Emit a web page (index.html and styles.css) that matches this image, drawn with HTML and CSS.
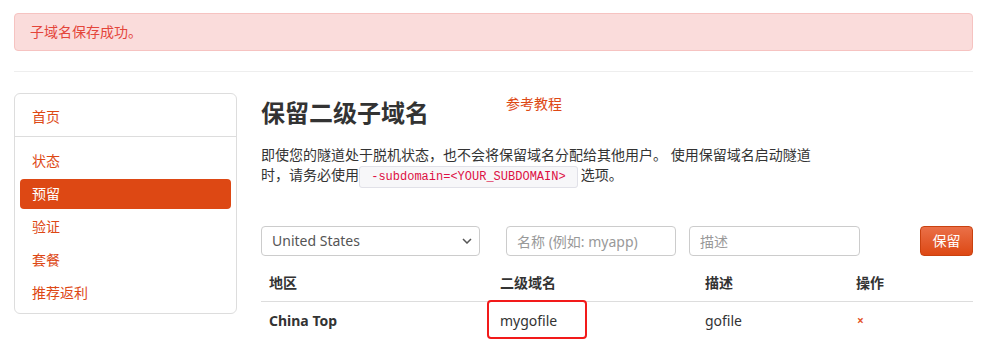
FILE: index.html
```html
<!DOCTYPE html>
<html lang="zh-CN">
<head>
  <meta charset="UTF-8">
  <title>保留二级子域名</title>
  <link rel="stylesheet" href="styles.css">
</head>
<body>
  <div class="container">
    <div class="alert">子域名保存成功。</div>
    <hr class="divider">
    <div class="layout">
      <div class="sidebar">
        <div class="sidebar-top">
          <a class="nav-item" href="#">首页</a>
        </div>
        <div class="sidebar-nav">
          <a class="nav-item" href="#">状态</a>
          <a class="nav-item active" href="#">预留</a>
          <a class="nav-item" href="#">验证</a>
          <a class="nav-item" href="#">套餐</a>
          <a class="nav-item" href="#">推荐返利</a>
        </div>
      </div>
      <div class="main">
        <div class="title-row">
          <h2>保留二级子域名</h2>
          <a class="guide" href="#">参考教程</a>
        </div>
        <p class="intro">即使您的隧道处于脱机状态，也不会将保留域名分配给其他用户。 使用保留域名启动隧道时，请务必使用<code> -subdomain=&lt;YOUR_SUBDOMAIN&gt; </code>选项。</p>
        <form class="reserve-form">
          <div class="select-wrap">
            <select class="field select">
              <option>United States</option>
            </select>
            <svg class="chevron" width="10" height="6" viewBox="0 0 10 6"><path d="M1 1l4 4 4-4" fill="none" stroke="#555" stroke-width="1.5"/></svg>
          </div>
          <input class="field name" type="text" placeholder="名称 (例如: myapp)">
          <input class="field desc" type="text" placeholder="描述">
          <button class="btn" type="button">保留</button>
        </form>
        <table class="table">
          <thead>
            <tr>
              <th class="c-region">地区</th>
              <th class="c-sub">二级域名</th>
              <th class="c-desc">描述</th>
              <th>操作</th>
            </tr>
          </thead>
          <tbody>
            <tr>
              <td class="region">China Top</td>
              <td class="sub"><span class="mark">mygofile</span></td>
              <td>gofile</td>
              <td><a class="remove" href="#">×</a></td>
            </tr>
          </tbody>
        </table>
      </div>
    </div>
  </div>
</body>
</html>
```

FILE: styles.css
```css
body {
  margin: 0;
  font-family: "Noto Sans", "Noto Sans CJK SC", sans-serif;
  font-size: 14px;
  line-height: 20px;
  color: #333;
  background: #fff;
}
a {
  color: #dd4814;
  text-decoration: none;
}
.container {
  padding: 13px 23px 0 14px;
}
.alert {
  padding: 8px 15px;
  background: #fadcdb;
  border: 1px solid #f6c3c1;
  border-radius: 4px;
  color: #e4453a;
}
.divider {
  margin: 20px 0 21px;
  border: 0;
  border-top: 1px solid #eee;
}
.layout {
  display: flex;
  gap: 24px;
}
.sidebar {
  width: 221px;
  flex: none;
  border: 1px solid #ddd;
  border-radius: 6px;
  align-self: flex-start;
}
.sidebar-top {
  padding: 8px 5px 4px;
  border-bottom: 1px solid #ddd;
}
.sidebar-nav {
  padding: 9px 5px 5px;
  display: flex;
  flex-direction: column;
  gap: 3px;
}
.nav-item {
  display: block;
  padding: 5px 12px;
  border-radius: 4px;
}
.nav-item.active {
  background: #dd4814;
  color: #fff;
}
.main {
  flex: 1;
  min-width: 0;
}
.title-row {
  display: grid;
  grid-template-columns: 245px auto;
  align-items: start;
}
.title-row h2 {
  margin: 7px 0 0;
  font-size: 24px;
  line-height: 26px;
  font-weight: bold;
}
.guide {
  margin-top: 1px;
}
.intro {
  margin: 19px 0 0;
  max-width: 560px;
  line-height: 20px;
}
code {
  margin: 0 3px 0 0;
  padding: 3px 4px;
  font-family: "Liberation Mono", monospace;
  font-size: 12px;
  line-height: 16px;
  color: #dd1144;
  background: #f7f7f9;
  border: 1px solid #e1e1e8;
  border-radius: 3px;
  white-space: pre;
}
.reserve-form {
  display: flex;
  align-items: center;
  margin-top: 41px;
}
.field {
  box-sizing: border-box;
  height: 30px;
  padding: 4px 10px;
  font: inherit;
  color: #555;
  background: #fff;
  border: 1px solid #ccc;
  border-radius: 4px;
}
.field::placeholder {
  color: #999;
}
.select-wrap {
  position: relative;
}
.select {
  width: 219px;
  appearance: none;
}
.chevron {
  position: absolute;
  right: 8px;
  top: 12px;
}
.name {
  width: 170px;
  margin-left: 26px;
}
.desc {
  width: 171px;
  margin-left: 13px;
}
.btn {
  margin-left: auto;
  height: 30px;
  width: 53px;
  padding: 0;
  font: inherit;
  color: #fff;
  background: linear-gradient(#ea7048, #dd4814);
  border: 1px solid #c9410f;
  border-radius: 4px;
}
.table {
  width: 100%;
  margin-top: 9px;
  border-collapse: collapse;
}
.table th,
.table td {
  text-align: left;
  padding: 8px 8px;
}
.table th {
  border-bottom: 1px solid #ddd;
}
.c-region { width: 215px; }
.c-sub { width: 189px; }
.c-desc { width: 135px; }
.region {
  font-weight: bold;
}
.mark {
  position: relative;
}
.mark::before {
  content: "";
  position: absolute;
  left: -13px;
  right: -30px;
  top: -11px;
  bottom: -9px;
  border: 2px solid #f21a1a;
  border-radius: 4px;
}
.remove {
  font-size: 12px;
  font-weight: bold;
  color: #e4552b;
  padding-left: 1px;
}
```
